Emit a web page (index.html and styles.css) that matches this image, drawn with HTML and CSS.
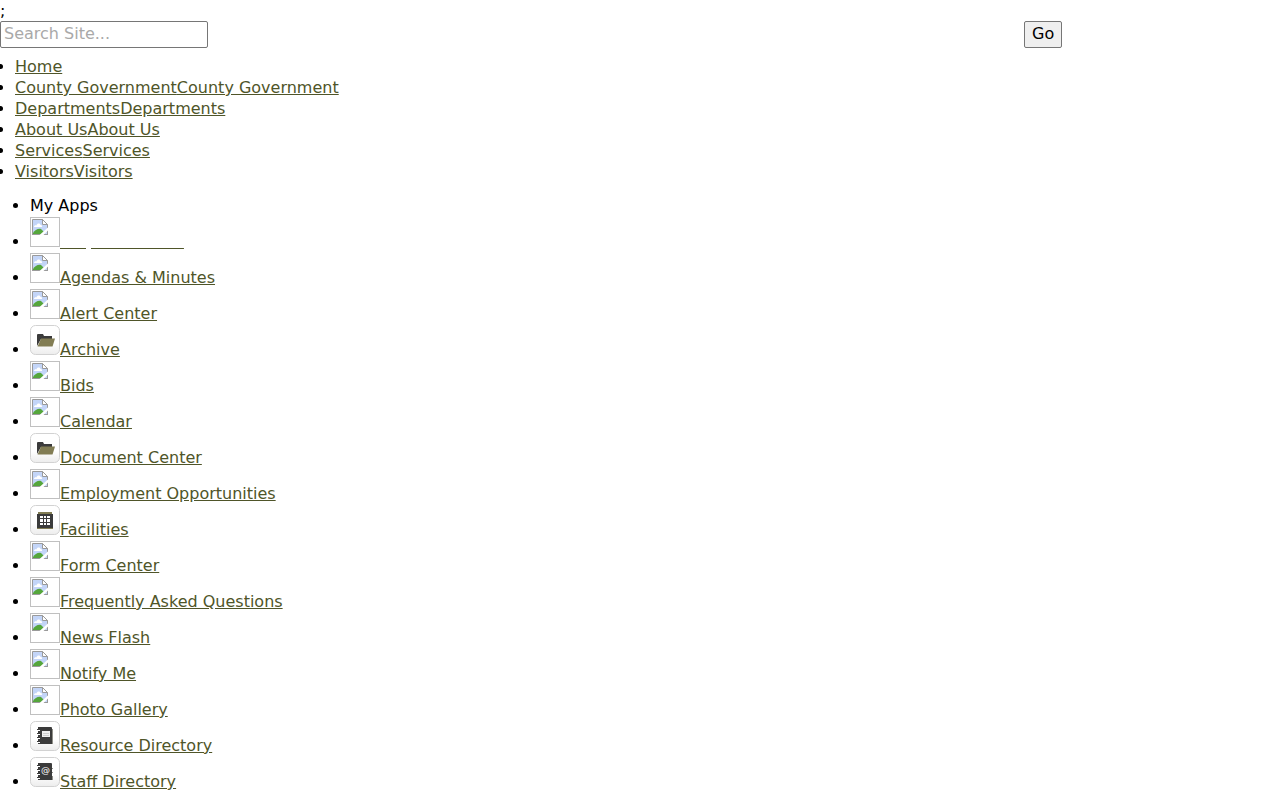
FILE: index.html
```html
<!DOCTYPE html>
<html lang="en">
<head>
  <meta charset="UTF-8" />
  <meta name="viewport" content="width=device-width, initial-scale=1" />
  <title>County Government</title>
  <link rel="stylesheet" href="styles.css">
</head>
<body>

  <svg class="sprite" aria-hidden="true">
    <linearGradient id="tile" x1="0" y1="0" x2="0" y2="1">
      <stop offset="0.6" stop-color="#ffffff" />
      <stop offset="1" stop-color="#ececec" />
    </linearGradient>

    <symbol id="missing" viewBox="0 0 30 30">
      <rect x="0.5" y="0.5" width="29" height="29" fill="#fff" stroke="#c0c0c0" />
      <path d="M2.5 2.5h10l5 5v10h-15z" fill="#c3d5f8" />
      <path d="M4 10c0-2 2-2 2.500-1.500C7 6 10 6 10.500 8c2 0 2 2 1 2z" fill="#fff" />
      <path d="M3 17v-1c2-3 5-5 8-4l3 3v2z" fill="#55a63c" />
      <path d="M2.500 18V2.500h10l5 5V18" fill="none" stroke="#9a9a9a" />
      <path d="M2 17.500h16" stroke="#9a9a9a" />
      <path d="M12.500 2.500v5h5z" fill="#fff" stroke="#9a9a9a" />
      <path d="M9 18.500l10-9v3l-6 6z" fill="#fff" />
    </symbol>

    <symbol id="folder" viewBox="0 0 30 30">
      <rect x="0.5" y="0.5" width="29" height="29" rx="5" fill="url(#tile)" stroke="#d2d2d2" />
      <path d="M7 21V10q0-1 1-1h5l1 2h8v3h-11z" fill="#3b3b3b" />
      <path d="M11 13.500h14l-2.500 8H7.500z" fill="#827d54" />
    </symbol>

    <symbol id="building" viewBox="0 0 30 30">
      <rect x="0.5" y="0.5" width="29" height="29" rx="5" fill="url(#tile)" stroke="#d2d2d2" />
      <path d="M8 7h14v2H8zM7 22h16v2H7z" fill="#827d54" />
      <path d="M7 9h16v14H7z" fill="#3b3b3b" />
      <path d="M10 11h3v2h-3zM14 11h2v2h-2zM17 11h3v2h-3zM10 14h3v3h-3zM14 14h2v3h-2zM17 14h3v3h-3zM10 18h3v2h-3zM14 18h2v2h-2zM17 18h3v2h-3z" fill="#fff" />
    </symbol>

    <symbol id="book" viewBox="0 0 30 30">
      <rect x="0.5" y="0.5" width="29" height="29" rx="5" fill="url(#tile)" stroke="#d2d2d2" />
      <path d="M11 8h12v15H11z" fill="#8f8f88" />
      <path d="M8 6h13q1 0 1 1v16H8z" fill="#3b3b3b" />
      <path d="M7 9h3M7 13h3M7 17h3M7 21h3" stroke="#fff" stroke-width="2" />
      <path d="M7 8.500h3M7 12.500h3M7 16.500h3M7 20.500h3" stroke="#3b3b3b" />
    </symbol>
  </svg>

  <div class="top">;</div>

  <form class="search" action="#">
    <div class="search-field">
      <input type="text" id="searchField" placeholder="Search Site..." aria-label="Search Site" />
    </div>
    <button type="submit">Go</button>
  </form>

  <ul class="main-nav">
    <li><a href="#">Home</a></li>
    <li><a href="#">County Government</a><a href="#">County Government</a></li>
    <li><a href="#">Departments</a><a href="#">Departments</a></li>
    <li><a href="#">About Us</a><a href="#">About Us</a></li>
    <li><a href="#">Services</a><a href="#">Services</a></li>
    <li><a href="#">Visitors</a><a href="#">Visitors</a></li>
  </ul>

  <ul class="apps">
    <li>My Apps</li>
    <li><a href="#" class="current"><svg class="icon"><use href="#missing" /></svg>Request Center</a></li>
    <li><a href="#"><svg class="icon"><use href="#missing" /></svg>Agendas &amp; Minutes</a></li>
    <li><a href="#"><svg class="icon"><use href="#missing" /></svg>Alert Center</a></li>
    <li><a href="#"><svg class="icon"><use href="#folder" /></svg>Archive</a></li>
    <li><a href="#"><svg class="icon"><use href="#missing" /></svg>Bids</a></li>
    <li><a href="#"><svg class="icon"><use href="#missing" /></svg>Calendar</a></li>
    <li><a href="#"><svg class="icon"><use href="#folder" /></svg>Document Center</a></li>
    <li><a href="#"><svg class="icon"><use href="#missing" /></svg>Employment Opportunities</a></li>
    <li><a href="#"><svg class="icon"><use href="#building" /></svg>Facilities</a></li>
    <li><a href="#"><svg class="icon"><use href="#missing" /></svg>Form Center</a></li>
    <li><a href="#"><svg class="icon"><use href="#missing" /></svg>Frequently Asked Questions</a></li>
    <li><a href="#"><svg class="icon"><use href="#missing" /></svg>News Flash</a></li>
    <li><a href="#"><svg class="icon"><use href="#missing" /></svg>Notify Me</a></li>
    <li><a href="#"><svg class="icon"><use href="#missing" /></svg>Photo Gallery</a></li>
    <li><a href="#"><svg class="icon" viewBox="0 0 30 30"><use href="#book" /><path d="M12 10h8v6h-8z" fill="#eee" /><path d="M13 12.500h6M13 14.500h6" stroke="#ccc" /></svg>Resource Directory</a></li>
    <li><a href="#"><svg class="icon" viewBox="0 0 30 30"><use href="#book" /><path d="M22 8h1v3h-1zM22 12h1v3h-1zM22 16h1v3h-1z" fill="#fff" /><text class="at" x="11" y="16">@</text></svg>Staff Directory</a></li>
  </ul>

</body>
</html>
```
FILE: styles.css
```css
body {
  margin: 0;
  font-family: 'DejaVu Sans', sans-serif;
  font-size: 16px;
  line-height: 21px;
  color: #000;
  background: #fff;
}

a {
  color: #4f5529;
}

.sprite {
  display: block;
  width: 0;
  height: 0;
}

.search {
  display: flex;
}

.search-field {
  width: 80%;
}

.search input,
.search button {
  display: block;
  box-sizing: border-box;
  height: 27px;
  font-family: inherit;
  font-size: 16px;
  border: 1px solid #767676;
  border-radius: 2px;
}

.search input {
  width: 208px;
  padding: 0 3px 2px;
}

.search input::placeholder {
  color: #a9a9a9;
}

.search button {
  padding: 0 7px 2px;
  color: #000;
  background: #efefef;
}

ul {
  padding: 0;
}

.main-nav {
  margin: 8px 0 0 15px;
}

.apps {
  margin: 13px 0 0 30px;
}

.apps li {
  padding-bottom: 1px;
}

.icon {
  width: 30px;
  height: 30px;
}

.at {
  font-size: 9px;
  fill: #fff;
}

.apps .current {
  color: #fff;
  text-decoration-color: #4f5529;
}
```
